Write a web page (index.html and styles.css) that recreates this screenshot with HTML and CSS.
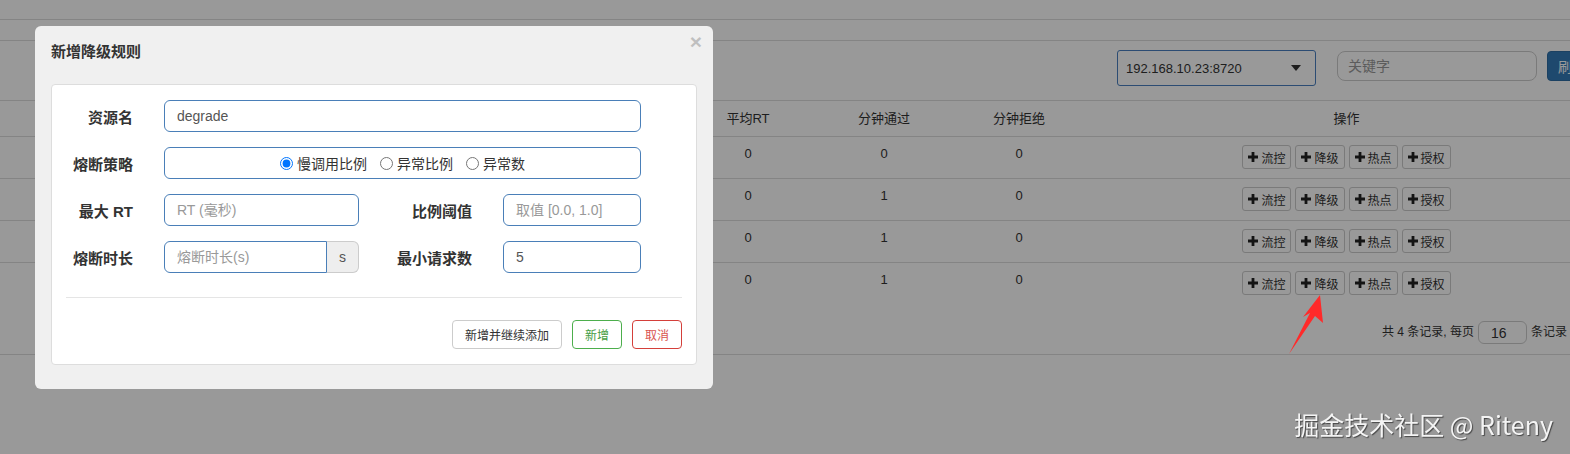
FILE: index.html
```html
<!DOCTYPE html>
<html lang="zh-CN">
<head>
    <meta charset="UTF-8">
    <title>降级规则</title>
    <link rel="stylesheet" href="styles.css">
</head>
<body>
    <div class="page">
        <div class="topbar"></div>
        <div class="subbar"></div>

        <div class="toolbar">
            <div class="select-wrap">
                <select class="machine-select">
                    <option>192.168.10.23:8720</option>
                </select>
                <svg class="select-caret" width="10" height="6" viewBox="0 0 10 6"><path d="M0 0h10L5 6z" fill="#333"/></svg>
            </div>
            <input class="search-input" type="text" placeholder="关键字">
            <button class="btn-primary">刷新</button>
        </div>

        <div class="rules">
            <div class="grid-row head">
                <div class="cell"></div>
                <div class="cell">平均RT</div>
                <div class="cell">分钟通过</div>
                <div class="cell">分钟拒绝</div>
                <div class="cell">操作</div>
            </div>
            <div class="grid-row item">
                <div class="cell"></div>
                <div class="cell">0</div>
                <div class="cell">0</div>
                <div class="cell">0</div>
                <div class="cell actions">
                    <button class="btn-xs"><svg class="plus" viewBox="0 0 10 10"><path d="M3.6 0h2.8v3.6H10v2.8H6.4V10H3.6V6.4H0V3.6h3.6z"/></svg>流控</button>
                    <button class="btn-xs"><svg class="plus" viewBox="0 0 10 10"><path d="M3.6 0h2.8v3.6H10v2.8H6.4V10H3.6V6.4H0V3.6h3.6z"/></svg>降级</button>
                    <button class="btn-xs"><svg class="plus" viewBox="0 0 10 10"><path d="M3.6 0h2.8v3.6H10v2.8H6.4V10H3.6V6.4H0V3.6h3.6z"/></svg>热点</button>
                    <button class="btn-xs"><svg class="plus" viewBox="0 0 10 10"><path d="M3.6 0h2.8v3.6H10v2.8H6.4V10H3.6V6.4H0V3.6h3.6z"/></svg>授权</button>
                </div>
            </div>
            <div class="grid-row item">
                <div class="cell"></div>
                <div class="cell">0</div>
                <div class="cell">1</div>
                <div class="cell">0</div>
                <div class="cell actions">
                    <button class="btn-xs"><svg class="plus" viewBox="0 0 10 10"><path d="M3.6 0h2.8v3.6H10v2.8H6.4V10H3.6V6.4H0V3.6h3.6z"/></svg>流控</button>
                    <button class="btn-xs"><svg class="plus" viewBox="0 0 10 10"><path d="M3.6 0h2.8v3.6H10v2.8H6.4V10H3.6V6.4H0V3.6h3.6z"/></svg>降级</button>
                    <button class="btn-xs"><svg class="plus" viewBox="0 0 10 10"><path d="M3.6 0h2.8v3.6H10v2.8H6.4V10H3.6V6.4H0V3.6h3.6z"/></svg>热点</button>
                    <button class="btn-xs"><svg class="plus" viewBox="0 0 10 10"><path d="M3.6 0h2.8v3.6H10v2.8H6.4V10H3.6V6.4H0V3.6h3.6z"/></svg>授权</button>
                </div>
            </div>
            <div class="grid-row item">
                <div class="cell"></div>
                <div class="cell">0</div>
                <div class="cell">1</div>
                <div class="cell">0</div>
                <div class="cell actions">
                    <button class="btn-xs"><svg class="plus" viewBox="0 0 10 10"><path d="M3.6 0h2.8v3.6H10v2.8H6.4V10H3.6V6.4H0V3.6h3.6z"/></svg>流控</button>
                    <button class="btn-xs"><svg class="plus" viewBox="0 0 10 10"><path d="M3.6 0h2.8v3.6H10v2.8H6.4V10H3.6V6.4H0V3.6h3.6z"/></svg>降级</button>
                    <button class="btn-xs"><svg class="plus" viewBox="0 0 10 10"><path d="M3.6 0h2.8v3.6H10v2.8H6.4V10H3.6V6.4H0V3.6h3.6z"/></svg>热点</button>
                    <button class="btn-xs"><svg class="plus" viewBox="0 0 10 10"><path d="M3.6 0h2.8v3.6H10v2.8H6.4V10H3.6V6.4H0V3.6h3.6z"/></svg>授权</button>
                </div>
            </div>
            <div class="grid-row item last">
                <div class="cell"></div>
                <div class="cell">0</div>
                <div class="cell">1</div>
                <div class="cell">0</div>
                <div class="cell actions">
                    <button class="btn-xs"><svg class="plus" viewBox="0 0 10 10"><path d="M3.6 0h2.8v3.6H10v2.8H6.4V10H3.6V6.4H0V3.6h3.6z"/></svg>流控</button>
                    <button class="btn-xs"><svg class="plus" viewBox="0 0 10 10"><path d="M3.6 0h2.8v3.6H10v2.8H6.4V10H3.6V6.4H0V3.6h3.6z"/></svg>降级</button>
                    <button class="btn-xs"><svg class="plus" viewBox="0 0 10 10"><path d="M3.6 0h2.8v3.6H10v2.8H6.4V10H3.6V6.4H0V3.6h3.6z"/></svg>热点</button>
                    <button class="btn-xs"><svg class="plus" viewBox="0 0 10 10"><path d="M3.6 0h2.8v3.6H10v2.8H6.4V10H3.6V6.4H0V3.6h3.6z"/></svg>授权</button>
                </div>
            </div>
            <div class="pager">
                <span>共 4 条记录, 每页</span>
                <input class="page-size" type="text" value="16">
                <span>条记录</span>
            </div>
        </div>
    </div>

    <div class="backdrop"></div>

    <div class="modal">
        <button class="close">×</button>
        <h4 class="modal-title">新增降级规则</h4>
        <div class="panel">
            <form class="rule-form">
                <div class="form-row">
                    <label class="form-label">资源名</label>
                    <input class="form-input" type="text" value="degrade">
                </div>
                <div class="form-row">
                    <label class="form-label">熔断策略</label>
                    <div class="radio-box">
                        <label class="radio"><input type="radio" name="grade" checked>慢调用比例</label>
                        <label class="radio"><input type="radio" name="grade">异常比例</label>
                        <label class="radio"><input type="radio" name="grade">异常数</label>
                    </div>
                </div>
                <div class="form-row split">
                    <label class="form-label">最大 RT</label>
                    <input class="form-input" type="text" placeholder="RT (毫秒)">
                    <label class="form-label">比例阈值</label>
                    <input class="form-input" type="text" placeholder="取值 [0.0, 1.0]">
                </div>
                <div class="form-row split">
                    <label class="form-label">熔断时长</label>
                    <div class="input-group">
                        <input class="form-input" type="text" placeholder="熔断时长(s)">
                        <span class="addon">s</span>
                    </div>
                    <label class="form-label">最小请求数</label>
                    <input class="form-input" type="text" value="5">
                </div>
            </form>
            <div class="panel-footer">
                <button class="btn">新增并继续添加</button>
                <button class="btn success">新增</button>
                <button class="btn danger">取消</button>
            </div>
        </div>
    </div>

    <svg class="annotation" width="1570" height="454" viewBox="0 0 1570 454">
        <polygon points="1320,295 1323,323 1315,316 1289,354 1310,313 1303,317" fill="#ff2a2a"/>
    </svg>

    <div class="watermark">掘金技术社区 @ Riteny</div>
</body>
</html>
```

FILE: styles.css
```css
body {
    margin: 0;
    width: 1570px;
    height: 454px;
    overflow: hidden;
    background-color: #fff;
    color: #333;
    font-family: "Liberation Sans", "Noto Sans CJK SC", sans-serif;
    font-size: 13px;
}

button, input, select {
    font-family: inherit;
}

.page {
    width: 1607px;
}

.topbar {
    height: 19px;
    border-bottom: 1px solid #ddd;
}

.subbar {
    height: 20px;
    border-bottom: 1px solid #ddd;
}

/* toolbar above the table */
.toolbar {
    height: 59px;
    display: flex;
    justify-content: flex-end;
    align-items: flex-start;
    padding-right: 4px;
}

.select-wrap {
    position: relative;
    margin-top: 9px;
    margin-right: 21px;
}

.machine-select {
    width: 199px;
    height: 36px;
    appearance: none;
    background-color: #fff;
    border: 1px solid #4a7fc0;
    border-radius: 3px;
    padding: 0 8px;
    font-size: 13px;
    color: #333;
}

.select-caret {
    position: absolute;
    right: 15px;
    top: 15px;
}

.search-input {
    box-sizing: border-box;
    width: 200px;
    height: 30px;
    margin-top: 10px;
    margin-right: 10px;
    border: 1px solid #ccc;
    border-radius: 8px;
    padding: 0 10px;
    font-size: 14px;
}

.search-input::placeholder {
    color: #999;
}

.btn-primary {
    width: 56px;
    height: 30px;
    margin-top: 10px;
    background-color: #337ab7;
    border: 1px solid #2e6da4;
    border-radius: 4px;
    color: #fff;
    font-size: 14px;
    text-align: left;
    padding: 0 10px;
}

/* rules table */
.grid-row {
    display: grid;
    grid-template-columns: 680px 136px 136px 134px 521px;
}

.grid-row.head {
    height: 35px;
    border-top: 1px solid #ddd;
    border-bottom: 1px solid #ddd;
    align-items: center;
}

.grid-row.item {
    height: 41px;
    border-bottom: 1px solid #ddd;
}

.grid-row.item.last {
    height: 42px;
    border-bottom: none;
}

.cell {
    text-align: center;
    line-height: 18px;
}

.item .cell {
    padding-top: 8px;
}

.actions {
    display: flex;
    justify-content: center;
    gap: 4px;
}

.btn-xs {
    display: flex;
    align-items: center;
    gap: 3px;
    height: 24px;
    padding: 0 5px;
    background-color: #fff;
    border: 1px solid #ccc;
    border-radius: 3px;
    color: #333;
    font-size: 12px;
}

.plus {
    width: 10px;
    height: 10px;
    fill: #222;
}

.pager {
    box-sizing: border-box;
    height: 50px;
    border-bottom: 1px solid #ddd;
    display: flex;
    justify-content: flex-end;
    align-items: flex-start;
    gap: 4px;
    padding: 16px 40px 0 0;
    font-size: 12px;
    line-height: 23px;
    color: #333;
}

.page-size {
    box-sizing: border-box;
    width: 49px;
    height: 23px;
    border: 1px solid #ccc;
    border-radius: 6px;
    padding: 0 12px;
    font-size: 14px;
    color: #333;
}

/* modal layer */
.backdrop {
    position: fixed;
    inset: 0;
    background-color: rgba(0, 0, 0, 0.4);
}

.modal {
    position: fixed;
    left: 35px;
    top: 26px;
    width: 678px;
    height: 363px;
    box-sizing: border-box;
    padding: 16px 16px 0;
    background-color: #f0f0f0;
    border-radius: 6px;
}

.close {
    position: absolute;
    top: 5px;
    right: 11px;
    padding: 0;
    border: none;
    background: none;
    font-size: 21px;
    font-weight: bold;
    line-height: 21px;
    color: #000;
    opacity: 0.2;
}

.modal-title {
    margin: 0 0 22px;
    font-size: 15px;
    line-height: 20px;
    font-weight: bold;
    color: #333;
}

.panel {
    background-color: #fff;
    border: 1px solid #ddd;
    border-radius: 4px;
    padding: 15px 14px 15px;
}

.form-row {
    display: grid;
    grid-template-columns: 67px 477px;
    column-gap: 31px;
    align-items: center;
    height: 32px;
    margin-bottom: 15px;
}

.form-row.split {
    grid-template-columns: 67px 195px 82px 138px;
}

.form-row:last-child {
    margin-bottom: 0;
}

.form-label {
    text-align: right;
    font-size: 15px;
    font-weight: bold;
    color: #333;
    white-space: nowrap;
}

.form-input {
    box-sizing: border-box;
    width: 100%;
    height: 32px;
    border: 1px solid #4a7fb8;
    border-radius: 6px;
    padding: 0 12px;
    font-size: 14px;
    color: #555;
    background-color: #fff;
}

.form-input::placeholder {
    color: #999;
}

.radio-box {
    box-sizing: border-box;
    height: 32px;
    border: 1px solid #4a7fb8;
    border-radius: 6px;
    display: flex;
    justify-content: center;
    align-items: center;
    gap: 13px;
    font-size: 14px;
    color: #333;
}

.radio {
    display: flex;
    align-items: center;
}

.radio input {
    margin: 0 4px 0 0;
    width: 13px;
    height: 13px;
}

.input-group {
    display: flex;
}

.input-group .form-input {
    border-radius: 6px 0 0 6px;
}

.addon {
    flex-shrink: 0;
    box-sizing: border-box;
    width: 32px;
    height: 32px;
    line-height: 30px;
    text-align: center;
    background-color: #eee;
    border: 1px solid #ccc;
    border-left: none;
    border-radius: 0 6px 6px 0;
    color: #555;
    font-size: 14px;
}

.panel-footer {
    margin-top: 24px;
    border-top: 1px solid #e5e5e5;
    padding-top: 22px;
    display: flex;
    justify-content: flex-end;
    gap: 10px;
}

.btn {
    height: 29px;
    padding: 0 12px;
    background-color: #fff;
    border: 1px solid #ccc;
    border-radius: 4px;
    color: #333;
    font-size: 12px;
}

.btn.success {
    border-color: #4cae4c;
    color: #449d44;
}

.btn.danger {
    border-color: #d43f3a;
    color: #d9534f;
}

.annotation {
    position: fixed;
    left: 0;
    top: 0;
    pointer-events: none;
}

.watermark {
    position: fixed;
    right: 17px;
    bottom: 15px;
    font-family: "Noto Sans CJK SC", sans-serif;
    font-size: 25px;
    line-height: 30px;
    color: #f4f4f4;
    text-shadow: 1px 1px 1px rgba(0, 0, 0, 0.55);
}
```
